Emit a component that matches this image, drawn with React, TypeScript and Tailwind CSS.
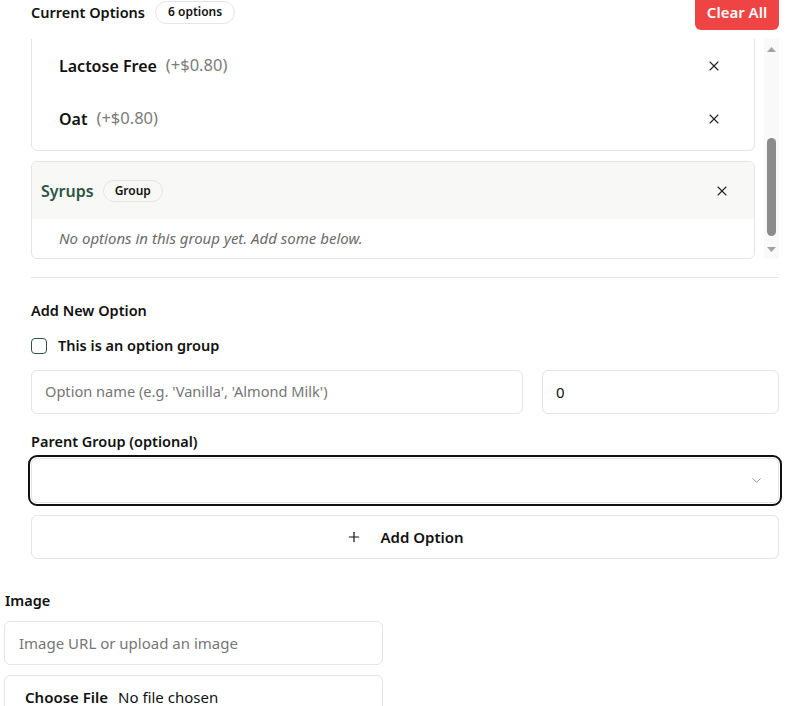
import React, { useEffect, useRef } from "react";
import { X, ChevronDown, Plus } from "lucide-react";

const font = { fontFamily: '"Noto Sans", "Open Sans", sans-serif' };

function Item({ name, price }: { name: string; price: string }) {
  return (
    <div className="h-[53px] flex items-center pl-[27px] pr-[32px]">
      <span className="text-[16px] font-semibold text-[#111]">{name}</span>
      <span className="ml-[9px] text-[16.5px] text-[#7b7b7b]">{price}</span>
      <X className="ml-auto text-[#222]" size={16} strokeWidth={1.6} />
    </div>
  );
}

function GroupHeader({ name }: { name: string }) {
  return (
    <div className="h-[57px] bg-[#f8f8f6] flex items-center pl-[9px] pr-[24px] rounded-t-[6px]">
      <span className="text-[16px] font-semibold text-[#2c5443]">{name}</span>
      <span className="ml-[9px] text-[12px] font-semibold text-[#111] border border-[#e5e5e3] rounded-full px-[11px] h-[22px] flex items-center">Group</span>
      <X className="ml-auto text-[#222]" size={16} strokeWidth={1.6} />
    </div>
  );
}

function Scrollbar() {
  return (
    <div className="w-[15px] h-full bg-[#f9f9f9] flex flex-col items-center">
      <svg width="15" height="15" viewBox="0 0 15 15" className="shrink-0">
        <path d="M3 13 L7.5 8 L12 13 Z" fill="#a3a3a3" />
      </svg>
      <div className="mt-[84px] w-[9px] h-[98px] rounded-full bg-[#8c8c8c]"></div>
      <div className="flex-1"></div>
      <svg width="15" height="15" viewBox="0 0 15 15" className="shrink-0">
        <path d="M3 3 L7.5 8 L12 3 Z" fill="#a3a3a3" />
      </svg>
    </div>
  );
}

export default function App() {
  const ref = useRef<HTMLDivElement>(null);
  useEffect(() => {
    if (ref.current) ref.current.scrollTop = 169;
  }, []);
  return (
    <div style={font} className="px-[4px] mt-[-6px] text-[#111] bg-white">
      <div className="ml-[27px] w-[748px]">
        <div className="flex items-center justify-between h-[36px]">
          <div className="flex items-center">
            <span className="text-[14.5px] font-semibold leading-[20px]">Current Options</span>
            <span className="ml-[10px] text-[12px] font-semibold leading-[16px] border border-[#e5e5e3] rounded-full px-[12px] h-[23px] flex items-center">6 options</span>
          </div>
          <button className="bg-[#ef4444] text-white text-[15px] font-semibold leading-[20px] rounded-[6px] h-[36px] w-[84px]">Clear All</button>
        </div>
        <div className="mt-[9px] h-[220px] flex">
          <div ref={ref} className="flex-1 h-full overflow-hidden pr-[9px]">
            <div className="flex flex-col gap-[10px] pb-4">
              <div className="border border-[#e5e5e3] rounded-[6px]">
                <GroupHeader name="Milk" />
                <div className="pt-[5px] pb-[5px]">
                  <Item name="Whole" price="(+$0.00)" />
                  <Item name="Almond" price="(+$0.80)" />
                  <Item name="Lactose Free" price="(+$0.80)" />
                  <Item name="Oat" price="(+$0.80)" />
                </div>
              </div>
              <div className="border border-[#e5e5e3] rounded-[6px]">
                <GroupHeader name="Syrups" />
                <div className="h-[39px] flex items-center pl-[27px] text-[15px] italic text-[#6b6b6b]">
                  No options in this group yet. Add some below.
                </div>
              </div>
            </div>
          </div>
          <Scrollbar />
        </div>
        <div className="mt-[18px] border-t border-[#e5e5e3] pt-[22px]">
          <div className="text-[14.5px] font-semibold leading-[20px]">Add New Option</div>
          <label className="mt-4 flex items-center h-[20px]">
            <span className="w-[16px] h-[16px] border-[1.5px] border-[#2c5443] rounded-[4px]"></span>
            <span className="ml-[11px] text-[14.5px] font-semibold">This is an option group</span>
          </label>
          <div className="mt-[14px] flex gap-[19px]">
            <div className="flex-1 h-[44px] border border-[#e5e5e3] rounded-[6px] flex items-center px-[13px] text-[14.6px] text-[#767676]">
              Option name (e.g. 'Vanilla', 'Almond Milk')
            </div>
            <div className="w-[237px] h-[44px] border border-[#e5e5e3] rounded-[6px] flex items-center px-[13px] text-[15px] text-[#111]">
              0
            </div>
          </div>
          <div className="mt-[17px] text-[14.5px] font-semibold leading-[20px]">Parent Group (optional)</div>
          <div className="mt-[7px] h-[45px] border border-[#e5e5e3] rounded-[6px] outline-2 outline-[#111] outline-offset-[1px] flex items-center justify-end pr-[14px]">
            <ChevronDown size={15} className="text-[#888]" strokeWidth={1.5} />
          </div>
          <div className="mt-[12px] h-[44px] border border-[#e5e5e3] rounded-[6px] flex items-center justify-center gap-[18px]">
            <Plus size={16} strokeWidth={1.8} className="text-[#111]" />
            <span className="text-[15px] font-semibold">Add Option</span>
          </div>
        </div>
      </div>
      <div className="w-[379px] mt-[31px]">
        <div className="pl-[1px] text-[14.5px] font-semibold leading-[20px]">Image</div>
        <div className="mt-[11px] h-[44px] border border-[#e5e5e3] rounded-[6px] flex items-center px-[14px] text-[15px] text-[#767676]">
          Image URL or upload an image
        </div>
        <div className="mt-[10px] h-[44px] border border-[#e5e5e3] rounded-[6px] flex items-center pl-[20px] text-[15px]">
          <span className="font-semibold">Choose File</span>
          <span className="ml-[10px]">No file chosen</span>
        </div>
      </div>
    </div>
  );
}
